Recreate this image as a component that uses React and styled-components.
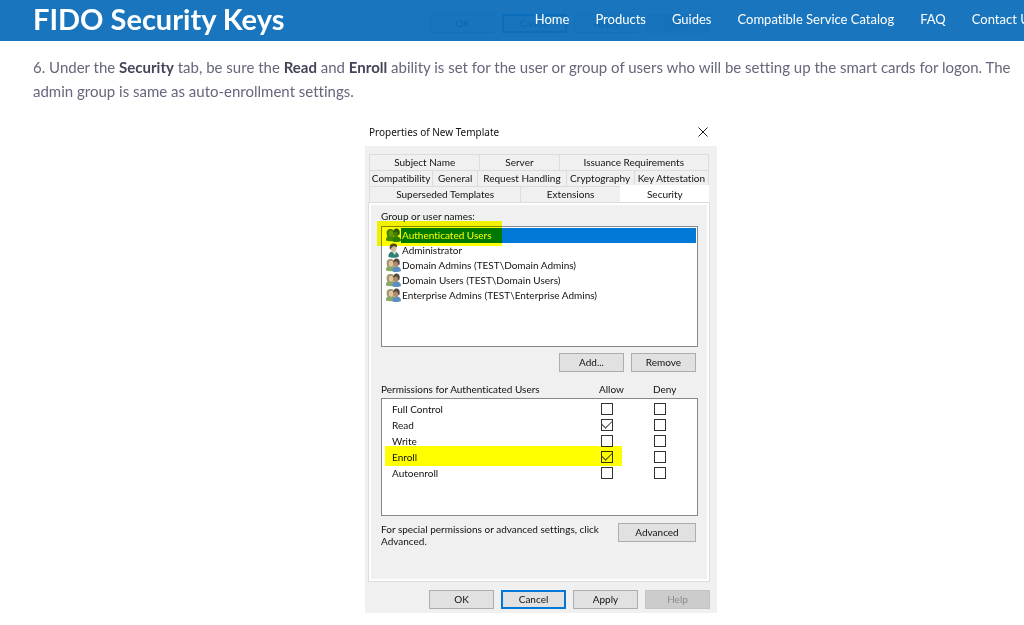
import React, { useState } from "react";
import styled, { createGlobalStyle } from "styled-components";

const users = [
  { name: "Authenticated Users", group: true },
  { name: "Administrator", group: false },
  { name: "Domain Admins (TEST\\Domain Admins)", group: true },
  { name: "Domain Users (TEST\\Domain Users)", group: true },
  { name: "Enterprise Admins (TEST\\Enterprise Admins)", group: true },
];

const permissions = ["Full Control", "Read", "Write", "Enroll", "Autoenroll"];

const links = [
  "Home",
  "Products",
  "Guides",
  "Compatible Service Catalog",
  "FAQ",
  "Contact Us",
];

const plainColors = {
  leftBody: "#86a866",
  leftHair: "#a3976c",
  leftFace: "#dfc5a2",
  rightBody: "#5b8fc4",
  rightHair: "#54483f",
  rightFace: "#b58a68",
};

const selectedColors = {
  leftBody: "#3f8a90",
  leftHair: "#4a8094",
  leftFace: "#6a9cb0",
  rightBody: "#2c7cc8",
  rightHair: "#225a90",
  rightFace: "#4a7c9c",
};

function UserIcon({ group, selected }) {
  const colors = selected ? selectedColors : plainColors;

  if (!group) {
    return (
      <Icon viewBox="0 0 15 15" aria-hidden="true">
        <path d="M2.500 14c-.5-4 2-5.500 5-5.500s5.500 2 5.500 5c-2 1.500-8 1.800-10.500.5z" fill="#2f8173" />
        <path d="M6 8.500l3 3.500 1-3.500z" fill="#dcebe4" />
        <ellipse cx="7.500" cy="5.500" rx="2.800" ry="3.300" fill="#d9b79a" />
        <path d="M4 6.500c-1-4 .5-6 3.500-6s4 1.500 3.500 4c-1.500-1-3-1.500-4-1s-1.500 2-3 3z" fill="#4e4a45" />
      </Icon>
    );
  }
  return (
    <Icon viewBox="0 0 15 15" aria-hidden="true">
      <path d="M0 12.500c-.2-3.500 1.500-5 4.500-5s5 2 5 5c-3 1-7 1-9.500 0z" fill={colors.leftBody} />
      <path d="M1 8c-1-5 0-7 3.500-7s4 2 3.500 6.500c-2 1.500-5 1.500-7 .5z" fill={colors.leftHair} />
      <ellipse cx="5" cy="5.800" rx="2.200" ry="3" fill={colors.leftFace} />
      <path d="M6.500 13.500c-.2-3.500 1-5 4-5s4.500 1.500 4.500 4.500c-2 1.200-6 1.500-8.500.5z" fill={colors.rightBody} />
      <ellipse cx="10" cy="5.800" rx="2.700" ry="3.400" fill={colors.rightFace} />
      <path d="M7.500 5c-.5-3 1-4.500 3-4.500s4 2 3 6c-.5.5-1 .5-1.500 0 0-2-1-3-2-3s-1.500.5-2.500 1.500z" fill={colors.rightHair} />
    </Icon>
  );
}

function DialogButtons() {
  return (
    <Footer>
      <Button>OK</Button>
      <Button $primary>Cancel</Button>
      <Button>Apply</Button>
      <Button disabled>Help</Button>
    </Footer>
  );
}

function Dialog() {
  const [selected, setSelected] = useState("Authenticated Users");
  const [allowed, setAllowed] = useState(["Read", "Enroll"]);
  const [denied, setDenied] = useState([]);

  const toggle = (list, setList, name) => {
    setList(
      list.includes(name) ? list.filter((n) => n !== name) : [...list, name]
    );
  };

  return (
    <Window>
      <TitleBar>
        <span>Properties of New Template</span>
        <CloseButton aria-label="Close">
          <svg width="10" height="10" viewBox="0 0 10 10">
            <path d="M0.5 0.5l9 9M9.5 0.5l-9 9" stroke="#222" fill="none" />
          </svg>
        </CloseButton>
      </TitleBar>
      <WindowBody>
        <TabRow $columns="110fr 79fr 149fr">
          <Tab>Subject Name</Tab>
          <Tab>Server</Tab>
          <Tab>Issuance Requirements</Tab>
        </TabRow>
        <TabRow $columns="63fr 45fr 88fr 68fr 74fr">
          <Tab>Compatibility</Tab>
          <Tab>General</Tab>
          <Tab>Request Handling</Tab>
          <Tab>Cryptography</Tab>
          <Tab>Key Attestation</Tab>
        </TabRow>
        <TabRow $columns="151fr 99fr 88fr">
          <Tab>Superseded Templates</Tab>
          <Tab>Extensions</Tab>
          <Tab $active>Security</Tab>
        </TabRow>
        <Panel>
          <Label>Group or user names:</Label>
          <UserList>
            {users.map((user) => (
              <UserRow key={user.name}>
                <UserButton onClick={() => setSelected(user.name)}>
                  <UserIcon
                    group={user.group}
                    selected={selected === user.name}
                  />
                  <UserName $selected={selected === user.name}>
                    {user.name}
                  </UserName>
                </UserButton>
              </UserRow>
            ))}
            <UserMarker aria-hidden="true" />
          </UserList>
          <ButtonRow>
            <Button>Add...</Button>
            <Button>Remove</Button>
          </ButtonRow>
          <PermissionTable>
            <thead>
              <HeadRow>
                <th scope="col">Permissions for Authenticated Users</th>
                <th scope="col">Allow</th>
                <th scope="col">Deny</th>
              </HeadRow>
            </thead>
            <PermissionBody>
              {permissions.map((name) => (
                <PermissionRow key={name} $marked={name === "Enroll"}>
                  <th scope="row">{name}</th>
                  <td>
                    <Checkbox
                      type="checkbox"
                      aria-label={`Allow ${name}`}
                      checked={allowed.includes(name)}
                      onChange={() => toggle(allowed, setAllowed, name)}
                    />
                  </td>
                  <td>
                    <Checkbox
                      type="checkbox"
                      aria-label={`Deny ${name}`}
                      checked={denied.includes(name)}
                      onChange={() => toggle(denied, setDenied, name)}
                    />
                  </td>
                </PermissionRow>
              ))}
            </PermissionBody>
          </PermissionTable>
          <Advanced>
            <p>For special permissions or advanced settings, click Advanced.</p>
            <Button $wide>Advanced</Button>
          </Advanced>
        </Panel>
        <DialogButtons />
      </WindowBody>
    </Window>
  );
}

function App() {
  return (
    <>
      <GlobalStyle />
      <Header>
        <Brand>FIDO Security Keys</Brand>
        <Nav>
          {links.map((link) => (
            <NavLink key={link} href="#">
              {link}
            </NavLink>
          ))}
        </Nav>
      </Header>
      <Content>
        {/* end of the previous step, scrolled under the header */}
        <PreviousStep aria-hidden="true">
          <PreviousEdge />
          <DialogButtons />
        </PreviousStep>
        <Step>
          6. Under the <b>Security</b> tab, be sure the <b>Read</b> and{" "}
          <b>Enroll</b> ability is set for the user or group of users who will
          be setting up the smart cards for logon. The admin group is same as
          auto-enrollment settings.
        </Step>
        <Dialog />
      </Content>
    </>
  );
}

const GlobalStyle = createGlobalStyle`
  * {
    box-sizing: border-box;
  }
  body {
    margin: 0;
    background-color: white;
    color: #66667c;
    font-family: Lato, sans-serif;
    font-variant-ligatures: none;
    overflow: hidden;
  }
  p {
    margin: 0;
  }
`;

const Header = styled.header`
  position: fixed;
  top: 0;
  left: 0;
  right: 0;
  z-index: 1;
  display: flex;
  align-items: center;
  height: 41px;
  padding: 0 0 4px 33px;
  overflow: hidden;
  background-color: rgba(11, 109, 186, 0.94);
`;

const Brand = styled.div`
  flex: none;
  width: 49vw;
  color: white;
  font-size: 29px;
  font-weight: 700;
  line-height: 36px;
`;

const Nav = styled.nav`
  display: flex;
  flex: none;
  gap: 26px;
`;

const NavLink = styled.a`
  color: white;
  font-size: 13px;
  line-height: 20px;
  white-space: nowrap;
  text-decoration: none;
`;

/* the page column is wider than the window and runs under its right edge */
const Content = styled.main`
  width: calc(100% + 25px);
  padding-left: 33px;
`;

const PreviousStep = styled.div`
  width: 352px;
  height: 41px;
  margin: 0 auto;
  padding-right: 6px;
  background-color: #f0f0f0;
`;

const PreviousEdge = styled.div`
  height: 6px;
  margin: 0 1px 0 4px;
  border: solid #dcdcdc;
  border-width: 0 1px 1px;
`;

const Step = styled.p`
  padding-top: 14px;
  font-size: 15px;
  line-height: 24px;

  b {
    color: #44445a;
    font-weight: 700;
  }
`;

const Window = styled.section`
  width: 352px;
  margin: 12px auto 0;
  color: #111;
  font-family: Lato, sans-serif;
  font-size: 10px;
  line-height: 12px;
`;

const TitleBar = styled.div`
  display: flex;
  align-items: center;
  justify-content: space-between;
  height: 31px;
  padding: 2px 9px 0 4px;
  font-family: "Noto Sans", sans-serif;
`;

const CloseButton = styled.button`
  display: flex;
  padding: 0;
  border: 0;
  background: none;
`;

const WindowBody = styled.div`
  padding: 8px 7px 4px 3px;
  background-color: #f0f0f0;
`;

const TabRow = styled.div`
  display: grid;
  grid-template-columns: ${(props) => props.$columns};
  height: 16px;
  margin: 0 1px;
  border-right: 1px solid #dcdcdc;
`;

const Tab = styled.button`
  margin: ${(props) => (props.$active ? "-1px -1px 0 0" : "0")};
  padding: 0 0 1px;
  border: solid #dcdcdc;
  border-width: 1px 0 0 1px;
  border-color: ${(props) => (props.$active ? "white" : "#dcdcdc")};
  background-color: ${(props) => (props.$active ? "white" : "#f0f0f0")};
  color: inherit;
  font: inherit;
  white-space: nowrap;
`;

const Panel = styled.div`
  height: 380px;
  padding: 6px 11px 0 12px;
  border: 1px solid #dcdcdc;
  box-shadow: inset 0 0 0 2px white;
`;

const Label = styled.div`
  height: 17px;
  padding-top: 1px;
`;

const UserList = styled.ul`
  position: relative;
  height: 121px;
  margin: 0 0 6px;
  padding: 1px 1px 0 4px;
  border: 1px solid #828790;
  background-color: white;
  list-style: none;
`;

const UserRow = styled.li`
  height: 15px;
`;

const UserButton = styled.button`
  display: flex;
  width: 100%;
  padding: 0;
  border: 0;
  background: none;
  color: inherit;
  font: inherit;
  text-align: left;
`;

const Icon = styled.svg`
  flex: none;
  width: 15px;
  height: 15px;
`;

const UserName = styled.span`
  flex: 1;
  padding-left: 1px;
  background-color: ${(props) => (props.$selected ? "#0078d7" : "transparent")};
  color: ${(props) => (props.$selected ? "white" : "inherit")};
  line-height: 15px;
`;

/* highlighter pen over the first user */
const UserMarker = styled.li`
  position: absolute;
  top: -6px;
  left: -5px;
  width: 125px;
  height: 25px;
  background-color: #ff0;
  mix-blend-mode: multiply;
  pointer-events: none;
`;

const ButtonRow = styled.div`
  display: flex;
  justify-content: flex-end;
  gap: 7px;
  padding-right: 2px;
`;

const Button = styled.button`
  flex: none;
  width: ${(props) => (props.$wide ? "78px" : "65px")};
  height: 19px;
  padding: 0 0 1px;
  border: ${(props) =>
    props.$primary ? "2px solid #0078d7" : "1px solid #adadad"};
  background-color: #e1e1e1;
  color: #111;
  font-family: Lato, sans-serif;
  font-size: 10px;
  line-height: 12px;

  &:disabled {
    border-color: #c4c4c4;
    background-color: #ccc;
    color: #8c8c8c;
  }
`;

const Footer = styled.div`
  display: flex;
  justify-content: flex-end;
  gap: 7px;
  padding-top: 8px;
`;

const PermissionTable = styled.table`
  display: block;
  margin-top: 11px;

  thead {
    display: block;
  }
  th,
  td {
    padding: 0;
    font-weight: 400;
    text-align: left;
  }
`;

const HeadRow = styled.tr`
  display: grid;
  grid-template-columns: 1fr 54px 45px;
  height: 15px;
`;

const PermissionBody = styled.tbody`
  display: block;
  height: 118px;
  padding: 2px 0 0 10px;
  border: 1px solid #828790;
  background-color: white;
`;

const PermissionRow = styled.tr`
  position: relative;
  display: grid;
  grid-template-columns: 1fr 53px 43px;
  align-items: center;
  height: 16px;

  &::after {
    content: "";
    display: ${(props) => (props.$marked ? "block" : "none")};
    position: absolute;
    top: -3px;
    left: -7px;
    right: 75px;
    height: 20px;
    background-color: #ff0;
    mix-blend-mode: multiply;
    pointer-events: none;
  }
`;

const Checkbox = styled.input`
  appearance: none;
  display: block;
  width: 12px;
  height: 12px;
  margin: 0;
  border: 1px solid #333;
  background-color: white;

  &:checked::after {
    content: "";
    display: block;
    width: 9px;
    height: 5px;
    border: solid #444;
    border-width: 0 0 1px 1px;
    transform: rotate(-45deg);
  }
`;

const Advanced = styled.div`
  display: flex;
  justify-content: space-between;
  padding: 7px 2px 0 0;

  p {
    width: 224px;
  }
`;

export default App;
